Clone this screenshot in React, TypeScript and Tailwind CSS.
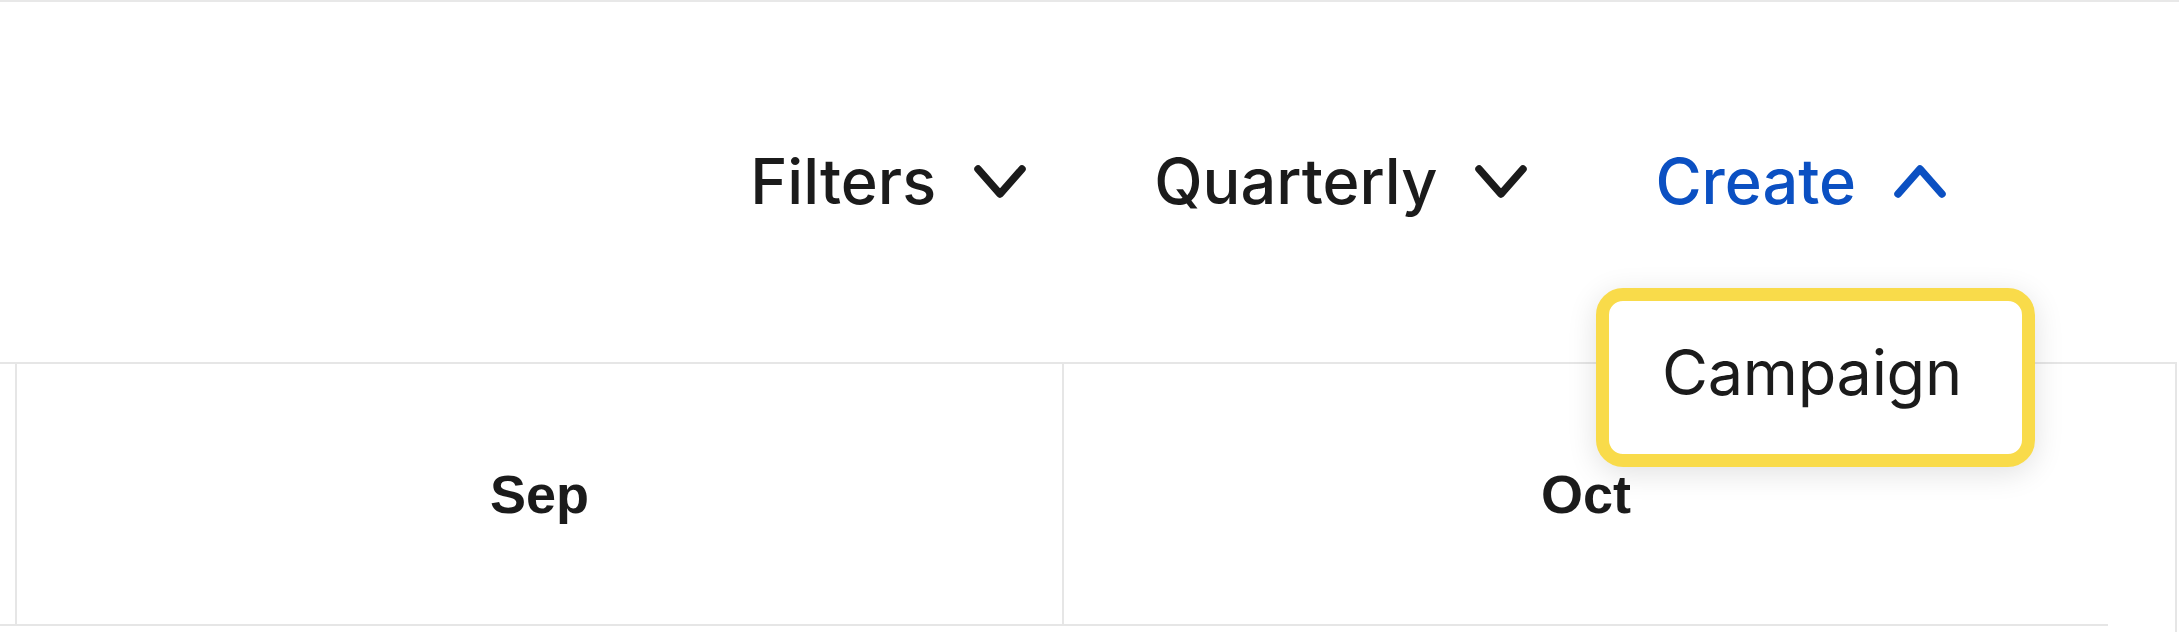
import React from "react";

const Chevron = ({ up = false, color }: { up?: boolean; color: string }) => (
  <svg width="52" height="33" viewBox="0 0 52 33" fill="none" className="shrink-0">
    <polyline
      points={up ? "4,29 26,4 48,29" : "4,4 26,29 48,4"}
      stroke={color}
      strokeWidth="7.5"
      strokeLinecap="round"
      strokeLinejoin="round"
    />
  </svg>
);

const ToolbarItem = ({ label, up, active }: { label: string; up?: boolean; active?: boolean }) => (
  <button
    className={
      "flex items-center gap-[38px] text-[63px] font-medium leading-none " +
      (active ? "text-[#0b50c2]" : "text-[#1b1b1b]")
    }
  >
    <span>{label}</span>
    <Chevron up={up} color={active ? "#0b50c2" : "#1b1b1b"} />
  </button>
);

export default function App() {
  return (
    <div
      className="relative w-[2179px] h-[634px] overflow-hidden bg-white border-t-2 border-[#e8e8e8]"
      style={{ fontFamily: "Inter, 'Noto Sans', sans-serif" }}
    >
      <div className="h-[360px] pt-[139px]">
        <div className="flex h-[80px] items-center justify-end gap-[128px] pr-[233px]">
          <ToolbarItem label="Filters" />
          <ToolbarItem label="Quarterly" />
          <ToolbarItem label="Create" up active />
        </div>
      </div>

      <div className="w-[2177px] h-[270px] border-t-2 border-r-2 border-[#e6e6e6]">
        <div
          className="flex h-[262px] border-b-2 border-[#e6e6e6] w-[2108px] font-bold text-[54px] text-[#1b1b1b]"
          style={{ fontFamily: "'Liberation Sans', Arial, sans-serif" }}
        >
          <div className="w-[15px]" />
          <div className="w-[1047px] flex items-center justify-center border-l-2 border-[#e6e6e6]">
            Sep
          </div>
          <div className="flex-1 flex items-center justify-center border-l-2 border-[#e6e6e6]">
            Oct
          </div>
        </div>
      </div>

      <div className="absolute left-[1596px] top-[286px] w-[439px] h-[179px] rounded-[27px] border-[13px] border-[#f9db4a] bg-white shadow-[0_6px_30px_rgba(0,0,0,0.12)] flex items-center pl-[53px] pb-[10px]">
        <span className="text-[63px] leading-none tracking-[-0.3px] text-[#1b1b1b]">Campaign</span>
      </div>
    </div>
  );
}
